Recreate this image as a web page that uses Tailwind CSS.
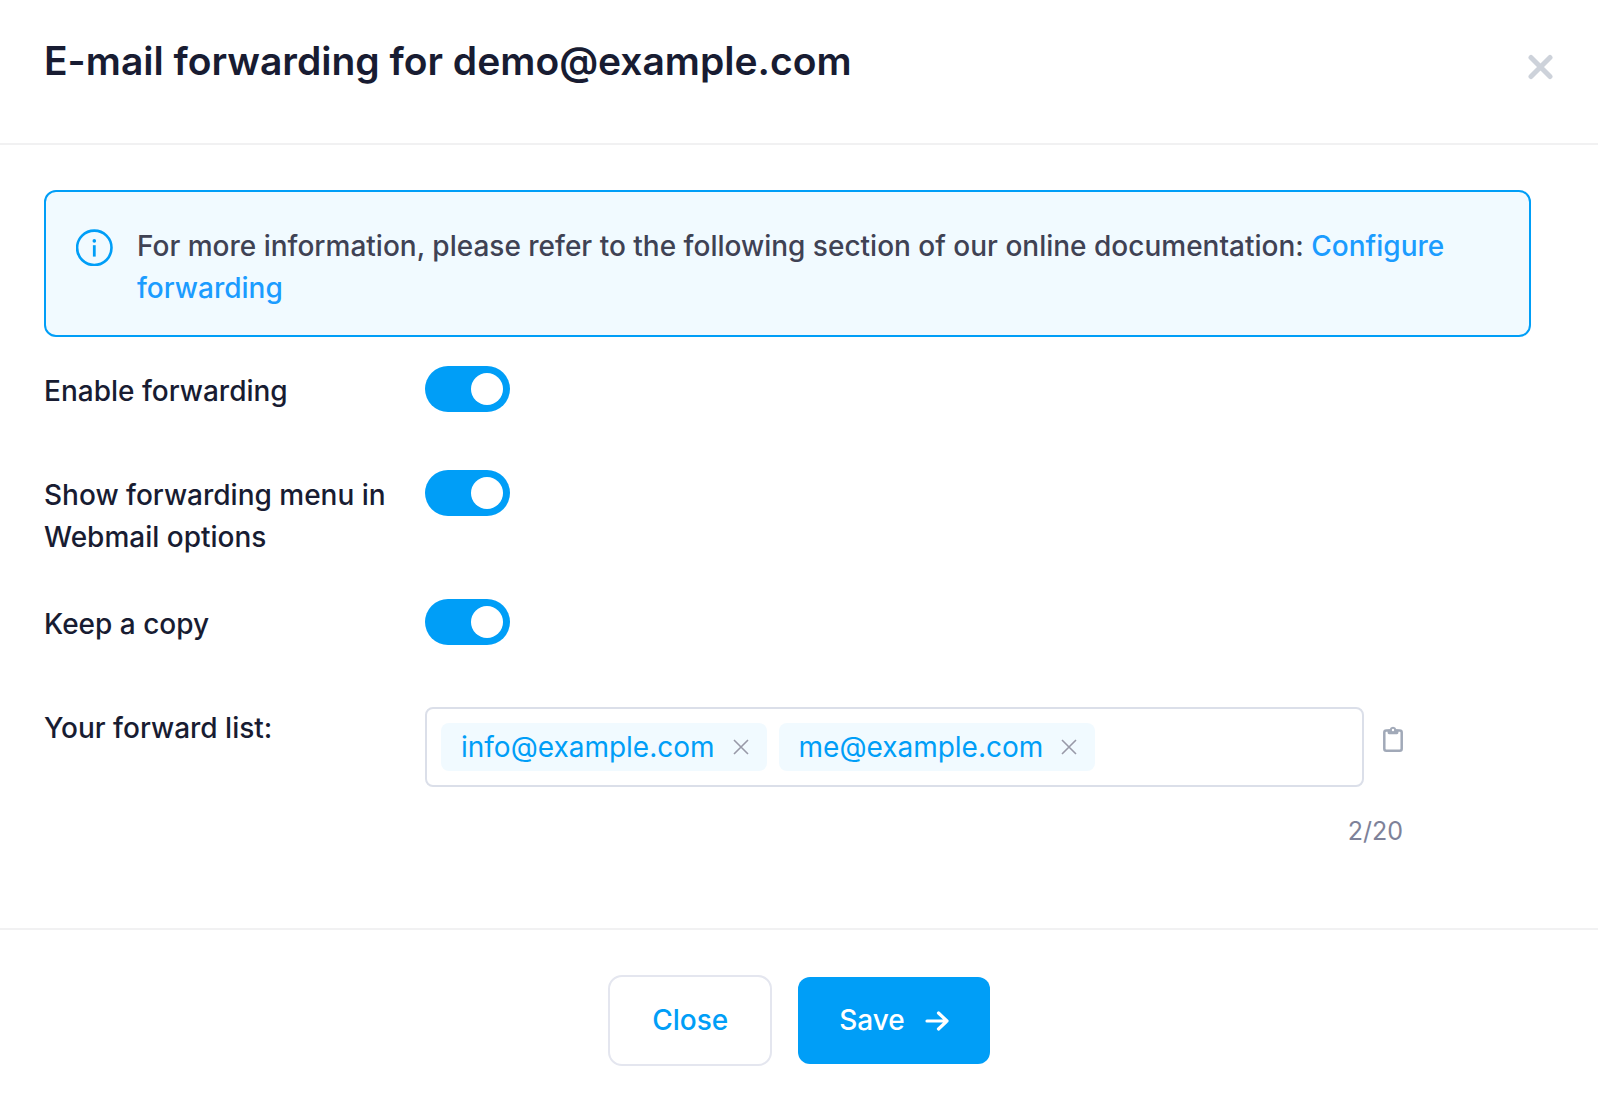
<!DOCTYPE html>
<html lang="en">
<head>
  <meta charset="UTF-8" />
  <meta name="viewport" content="width=device-width, initial-scale=1.0"/>
  <title>E-mail forwarding</title>
  <script src="https://cdn.jsdelivr.net/npm/@tailwindcss/browser@4"></script>
</head>
<body class="bg-white font-['Inter',sans-serif] text-[28px] leading-[42px] font-medium text-[#181c32]">
  <div role="dialog" aria-labelledby="dialog-title">
    <header class="flex items-start justify-between border-b-2 border-[#f1f1f2] px-11 pt-8 pb-[53px]">
      <h1 id="dialog-title" class="text-[39px] leading-[58px] font-semibold">E-mail forwarding for demo@example.com</h1>
      <button type="button" aria-label="Close dialog" class="mt-[22px] cursor-pointer text-[#cdd2da]">
        <svg class="size-[26px]" viewBox="0 0 26 26" fill="none" stroke="currentColor" stroke-width="5" stroke-linecap="round"><path d="M3 3.5l19 19M22 3.5l-19 19"/></svg>
      </button>
    </header>

    <form id="forward-form">
      <main class="pt-[45px] pr-[67px] pb-[77px] pl-11">
        <!-- Info notice -->
        <div class="flex items-start gap-6 rounded-xl border-2 border-[#009ef7] bg-[#f1faff] px-[30px] pt-[33px] pb-[26px]">
          <svg class="mt-1 size-[37px] shrink-0 text-[#009ef7]" viewBox="0 0 37 37" fill="none" stroke="currentColor">
            <circle cx="18.3" cy="18.8" r="17.2" stroke-width="2.6"/>
            <path d="M18.3 16.2v11.4" stroke-width="2.8"/>
            <circle cx="18.3" cy="11.9" r="1.8" fill="currentColor" stroke="none"/>
          </svg>
          <p class="text-[#3f4254]">For more information, please refer to the following section of our online documentation: <a href="#" class="text-[#1b9cff]">Configure forwarding</a></p>
        </div>

        <!-- Settings -->
        <div class="mt-[29px] flex items-start pb-[58px]">
          <label for="enable" class="w-[381px] shrink-0 pt-1 pr-6">Enable forwarding</label>
          <input type="checkbox" id="enable" role="switch" checked class="flex h-[46px] w-[85px] shrink-0 cursor-pointer appearance-none items-center rounded-full bg-[#cdd2da] px-[7px] before:size-8 before:rounded-full before:bg-white checked:justify-end checked:bg-[#009ef7]"/>
        </div>
        <div class="flex items-start pb-[41px]">
          <label for="show-menu" class="w-[381px] shrink-0 pt-1 pr-6">Show forwarding menu in Webmail options</label>
          <input type="checkbox" id="show-menu" role="switch" checked class="flex h-[46px] w-[85px] shrink-0 cursor-pointer appearance-none items-center rounded-full bg-[#cdd2da] px-[7px] before:size-8 before:rounded-full before:bg-white checked:justify-end checked:bg-[#009ef7]"/>
        </div>
        <div class="flex items-start pb-[58px]">
          <label for="keep-copy" class="w-[381px] shrink-0 pt-1 pr-6">Keep a copy</label>
          <input type="checkbox" id="keep-copy" role="switch" checked class="flex h-[46px] w-[85px] shrink-0 cursor-pointer appearance-none items-center rounded-full bg-[#cdd2da] px-[7px] before:size-8 before:rounded-full before:bg-white checked:justify-end checked:bg-[#009ef7]"/>
        </div>

        <!-- Forward list -->
        <div class="flex items-start pt-1">
          <label for="forward-list" class="w-[381px] shrink-0 pr-6">Your forward list:</label>
          <div class="mr-32 min-w-0 flex-1">
            <div class="flex items-start gap-[19px]">
              <div class="flex min-h-20 min-w-0 flex-1 flex-wrap items-center gap-3 rounded-lg border-2 border-[#dbdfe9] px-3.5">
                <span class="flex h-12 items-center gap-[18px] rounded-lg bg-[#f1faff] pr-[18px] pl-5 font-normal text-[#009ef7]">info@example.com
                  <button type="button" aria-label="Remove info@example.com" class="cursor-pointer text-[#9899a8]">
                    <svg class="size-4" viewBox="0 0 16 16" fill="none" stroke="currentColor" stroke-width="1.6"><path d="M1 1l14 14M15 1L1 15"/></svg>
                  </button>
                </span>
                <span class="flex h-12 items-center gap-[18px] rounded-lg bg-[#f1faff] pr-[18px] pl-5 font-normal text-[#009ef7]">me@example.com
                  <button type="button" aria-label="Remove me@example.com" class="cursor-pointer text-[#9899a8]">
                    <svg class="size-4" viewBox="0 0 16 16" fill="none" stroke="currentColor" stroke-width="1.6"><path d="M1 1l14 14M15 1L1 15"/></svg>
                  </button>
                </span>
                <input type="email" id="forward-list" class="w-24 min-w-0 flex-1 outline-none"/>
              </div>
              <button type="button" aria-label="Copy list" class="mt-[19px] cursor-pointer text-[#a1a9b8]">
                <svg class="h-[26px] w-5" viewBox="0 0 20 26" fill="none" stroke="currentColor" stroke-width="2.5">
                  <rect x="1.3" y="4.6" width="17.4" height="20.1" rx="2"/>
                  <path d="M4.6 3.4H6.6a3.5 3.5 0 0 1 6.8 0H15.4V6.8a1.4 1.4 0 0 1-1.4 1.4H6A1.4 1.4 0 0 1 4.6 6.8z" fill="currentColor" stroke="none"/>
                  <circle cx="10" cy="4" r="1.2" fill="white" stroke="none"/>
                </svg>
              </button>
            </div>
            <p class="mt-6 text-right text-[25px] leading-10 font-normal text-[#7e8299]">2/20</p>
          </div>
        </div>
      </main>

      <footer class="flex items-center justify-center gap-[26px] border-t-2 border-[#f1f1f2] px-11 pt-[45px] pb-[38px] leading-[43px]">
        <button type="button" class="cursor-pointer rounded-[14px] border-2 border-[#e4e6ef] px-[42px] py-[22px] text-[#009ef7]">Close</button>
        <button type="submit" class="flex cursor-pointer items-center gap-5 rounded-xl bg-[#009ef7] px-[41px] py-[22px] text-white">Save
          <svg class="h-5 w-6" viewBox="0 0 24 20" fill="none" stroke="currentColor" stroke-width="3.2" stroke-linecap="round" stroke-linejoin="round"><path d="M2 10h20M13.5 2L22 10l-8.5 8"/></svg>
        </button>
      </footer>
    </form>
  </div>

  <script>
    document.getElementById('forward-form').addEventListener('submit', (e) => e.preventDefault());
  </script>
</body>
</html>
